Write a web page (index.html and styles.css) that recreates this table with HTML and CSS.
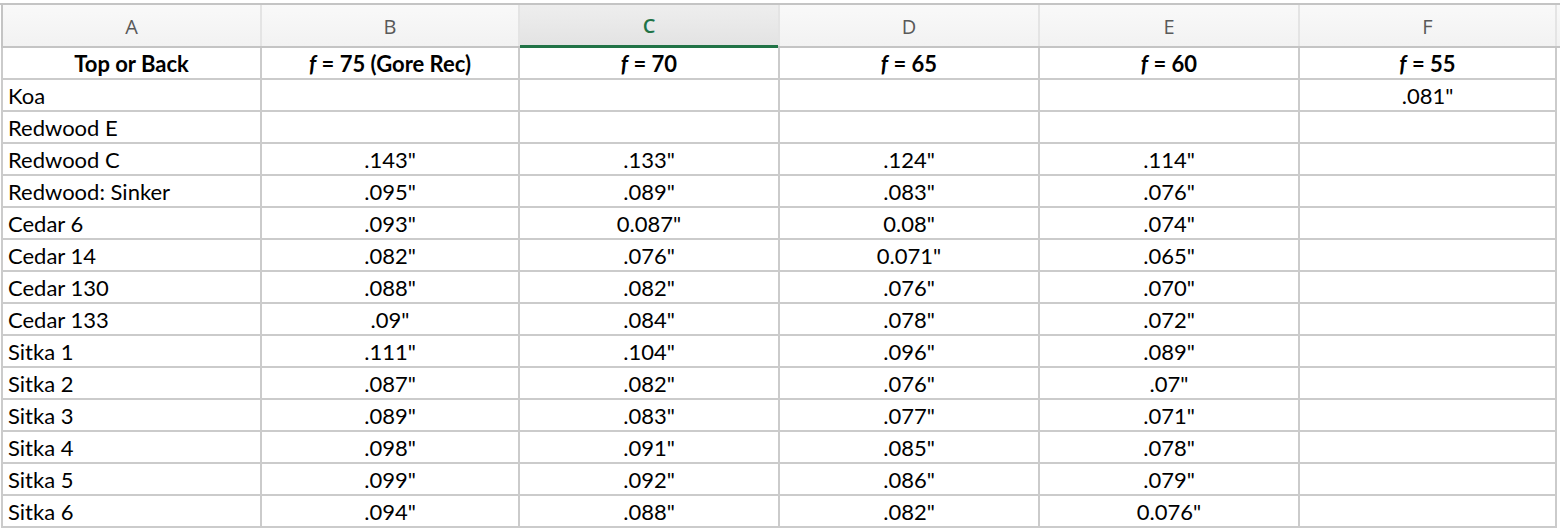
FILE: index.html
```html
<!DOCTYPE html>
<html>
<head>
<meta charset="utf-8">
<link rel="stylesheet" href="styles.css">
</head>
<body>
<div class="sheet">
  <div class="colhead">
    <div class="ch">A</div>
    <div class="ch">B</div>
    <div class="ch sel">C</div>
    <div class="ch">D</div>
    <div class="ch">E</div>
    <div class="ch">F</div>
    <div class="ch"></div>
  </div>
  <div class="grid">
    <div class="c hd">Top or Back</div>
    <div class="c hd"><i>f</i>&nbsp;= 75 (Gore Rec)</div>
    <div class="c hd"><i>f</i>&nbsp;= 70</div>
    <div class="c hd"><i>f</i>&nbsp;= 65</div>
    <div class="c hd"><i>f</i>&nbsp;= 60</div>
    <div class="c hd"><i>f</i>&nbsp;= 55</div>

    <div class="c l">Koa</div><div class="c"></div><div class="c"></div><div class="c"></div><div class="c"></div><div class="c">.081"</div>
    <div class="c l">Redwood E</div><div class="c"></div><div class="c"></div><div class="c"></div><div class="c"></div><div class="c"></div>
    <div class="c l">Redwood C</div><div class="c">.143"</div><div class="c">.133"</div><div class="c">.124"</div><div class="c">.114"</div><div class="c"></div>
    <div class="c l">Redwood: Sinker</div><div class="c">.095"</div><div class="c">.089"</div><div class="c">.083"</div><div class="c">.076"</div><div class="c"></div>
    <div class="c l">Cedar 6</div><div class="c">.093"</div><div class="c">0.087"</div><div class="c">0.08"</div><div class="c">.074"</div><div class="c"></div>
    <div class="c l">Cedar 14</div><div class="c">.082"</div><div class="c">.076"</div><div class="c">0.071"</div><div class="c">.065"</div><div class="c"></div>
    <div class="c l">Cedar 130</div><div class="c">.088"</div><div class="c">.082"</div><div class="c">.076"</div><div class="c">.070"</div><div class="c"></div>
    <div class="c l">Cedar 133</div><div class="c">.09"</div><div class="c">.084"</div><div class="c">.078"</div><div class="c">.072"</div><div class="c"></div>
    <div class="c l">Sitka 1</div><div class="c">.111"</div><div class="c">.104"</div><div class="c">.096"</div><div class="c">.089"</div><div class="c"></div>
    <div class="c l">Sitka 2</div><div class="c">.087"</div><div class="c">.082"</div><div class="c">.076"</div><div class="c">.07"</div><div class="c"></div>
    <div class="c l">Sitka 3</div><div class="c">.089"</div><div class="c">.083"</div><div class="c">.077"</div><div class="c">.071"</div><div class="c"></div>
    <div class="c l">Sitka 4</div><div class="c">.098"</div><div class="c">.091"</div><div class="c">.085"</div><div class="c">.078"</div><div class="c"></div>
    <div class="c l">Sitka 5</div><div class="c">.099"</div><div class="c">.092"</div><div class="c">.086"</div><div class="c">.079"</div><div class="c"></div>
    <div class="c l">Sitka 6</div><div class="c">.094"</div><div class="c">.088"</div><div class="c">.082"</div><div class="c">0.076"</div><div class="c"></div>
  </div>
</div>
</body>
</html>
```

FILE: styles.css
```css
html, body {
  margin: 0;
  padding: 0;
  background: #ffffff;
}
body {
  font-family: "Lato", "Open Sans", sans-serif;
  color: #000;
  overflow: hidden;
}
.sheet {
  margin-top: 3px;
  border-top: 2px solid #c4c4c4;
  width: 1560px;
}
.colhead {
  display: grid;
  grid-template-columns: 257px 256px 258px 258px 258px 255px 1fr;
  column-gap: 2px;
  background: #e4e4e4;
  border-left: 2px solid #c4c4c4;
  margin-left: 1px;
  height: 41px;
  border-bottom: 2px solid #c4c4c4;
}
.ch {
  display: flex;
  align-items: center;
  justify-content: center;
  font-family: "Open Sans", sans-serif;
  font-size: 20px;
  color: #595959;
  background: linear-gradient(#f9f9f9, #f2f2f2);
  padding-top: 1px;
}
.ch.sel {
  background: linear-gradient(#eeeeee, #e3e3e3);
  color: #217346;
  font-weight: 600;
  border-bottom: 3px solid #217346;
  margin-bottom: -2px;
  padding-top: 0;
}
.grid {
  display: grid;
  grid-template-columns: 257px 256px 258px 258px 258px 255px;
  gap: 2px;
  background: #cbcbcb;
  margin-left: 1px;
  padding: 0 2px 2px 2px;
  width: 1552px;
}
.c {
  background: #fff;
  height: 30px;
  display: flex;
  align-items: flex-end;
  justify-content: center;
  font-size: 22px;
  line-height: 24px;
  padding-bottom: 2px;
  box-sizing: border-box;
  white-space: nowrap;
}
.c.l {
  justify-content: flex-start;
  padding-left: 5px;
}
.c.hd {
  font-weight: 700;
}
.c.hd i {
  font-style: italic;
}
```
